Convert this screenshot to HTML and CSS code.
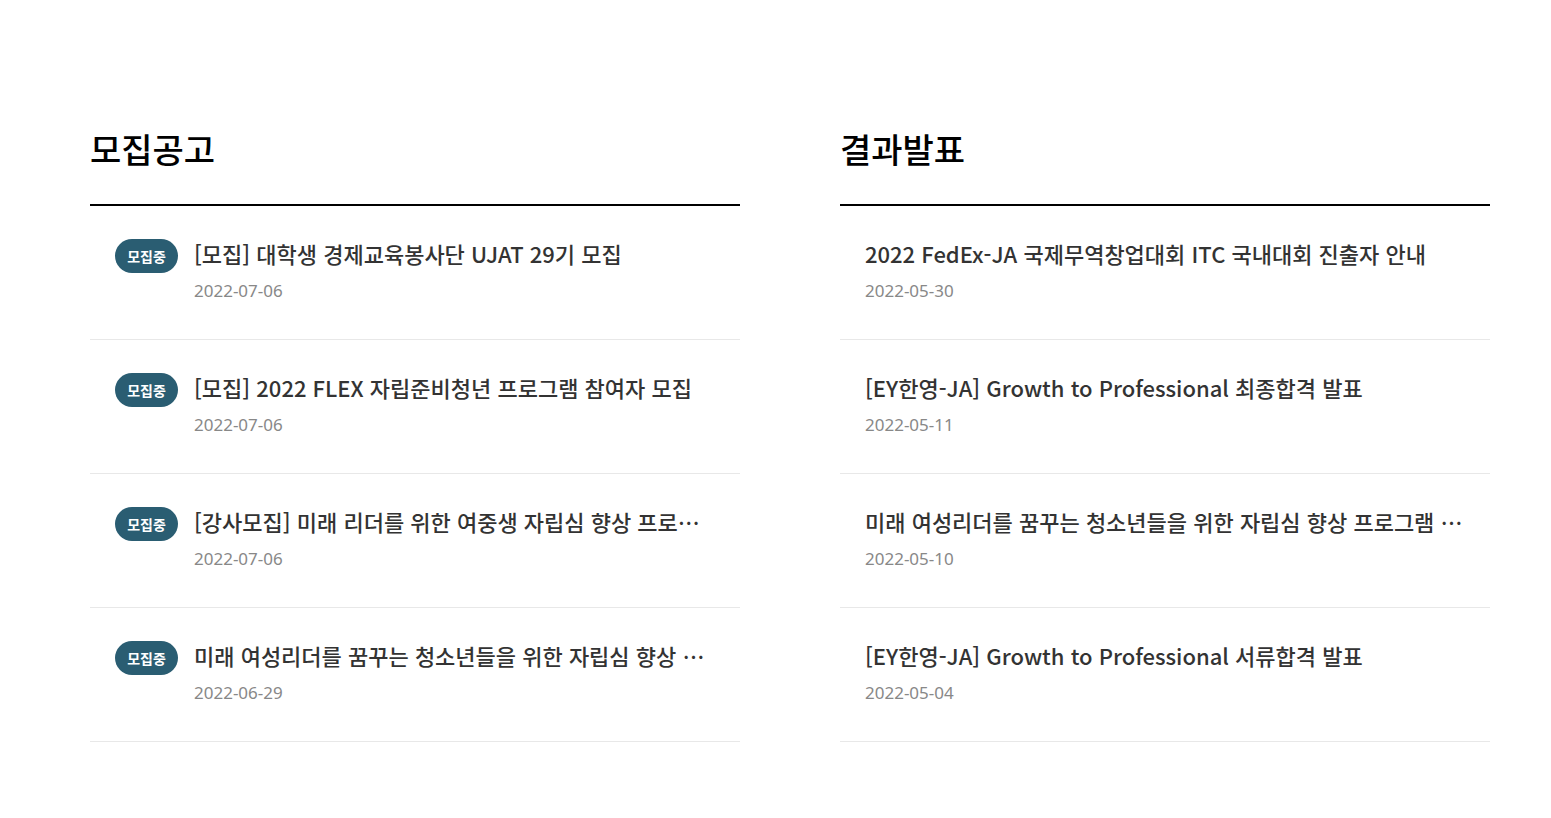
FILE: index.html
```html
<!DOCTYPE html>
<html lang="ko">
<head>
<meta charset="utf-8">
<link rel="stylesheet" href="styles.css">
</head>
<body>
<div class="wrap">
  <section class="board">
    <h2 class="board-title">모집공고</h2>
    <ul class="list">
      <li class="item">
        <span class="badge">모집중</span>
        <div class="text">
          <p class="title">[모집] 대학생 경제교육봉사단 UJAT 29기 모집</p>
          <p class="date">2022-07-06</p>
        </div>
      </li>
      <li class="item">
        <span class="badge">모집중</span>
        <div class="text">
          <p class="title">[모집] 2022 FLEX 자립준비청년 프로그램 참여자 모집</p>
          <p class="date">2022-07-06</p>
        </div>
      </li>
      <li class="item">
        <span class="badge">모집중</span>
        <div class="text">
          <p class="title">[강사모집] 미래 리더를 위한 여중생 자립심 향상 프로그램 강사 모집</p>
          <p class="date">2022-07-06</p>
        </div>
      </li>
      <li class="item">
        <span class="badge">모집중</span>
        <div class="text">
          <p class="title">미래 여성리더를 꿈꾸는 청소년들을 위한 자립심 향상 프로그램 참여자 모집</p>
          <p class="date">2022-06-29</p>
        </div>
      </li>
    </ul>
  </section>
  <section class="board">
    <h2 class="board-title">결과발표</h2>
    <ul class="list">
      <li class="item">
        <div class="text">
          <p class="title">2022 FedEx-JA 국제무역창업대회 ITC 국내대회 진출자 안내</p>
          <p class="date">2022-05-30</p>
        </div>
      </li>
      <li class="item">
        <div class="text">
          <p class="title">[EY한영-JA] Growth to Professional 최종합격 발표</p>
          <p class="date">2022-05-11</p>
        </div>
      </li>
      <li class="item">
        <div class="text">
          <p class="title">미래 여성리더를 꿈꾸는 청소년들을 위한 자립심 향상 프로그램 Girls Leadership 결과 발표</p>
          <p class="date">2022-05-10</p>
        </div>
      </li>
      <li class="item">
        <div class="text">
          <p class="title">[EY한영-JA] Growth to Professional 서류합격 발표</p>
          <p class="date">2022-05-04</p>
        </div>
      </li>
    </ul>
  </section>
</div>
</body>
</html>
```
FILE: styles.css
```css
* { box-sizing: border-box; }
html, body { margin: 0; padding: 0; background: #fff; }
body {
  font-family: "Noto Sans CJK KR", "Noto Sans", sans-serif;
  color: #333;
}
.wrap {
  display: flex;
  gap: 100px;
  padding: 124px 0 0 90px;
}
.board { width: 650px; }
.board-title {
  margin: 0;
  font-size: 34px;
  font-weight: 500;
  line-height: 50px;
  color: #000;
  padding-bottom: 30px;
  border-bottom: 2px solid #000;
}
.list { list-style: none; margin: 0; padding: 0; }
.item {
  display: flex;
  align-items: flex-start;
  gap: 16px;
  height: 134px;
  padding: 30px 25px 0;
  border-bottom: 1px solid #e8e8e8;
}
.badge {
  flex: none;
  width: 63px;
  height: 34px;
  margin-top: 3px;
  border-radius: 17px;
  background: #2a5d72;
  color: #fff;
  font-size: 14px;
  font-weight: 700;
  line-height: 34px;
  text-align: center;
}
.text { min-width: 0; flex: 1; }
.title {
  margin: 0;
  font-size: 22px;
  font-weight: 500;
  line-height: 34px;
  color: #333;
  white-space: nowrap;
  overflow: hidden;
  text-overflow: ellipsis;
}
.date {
  margin: 9px 0 0;
  font-family: "Noto Sans", "Noto Sans CJK KR", sans-serif;
  font-size: 17px;
  font-weight: 400;
  line-height: 24px;
  color: #888;
}
```
